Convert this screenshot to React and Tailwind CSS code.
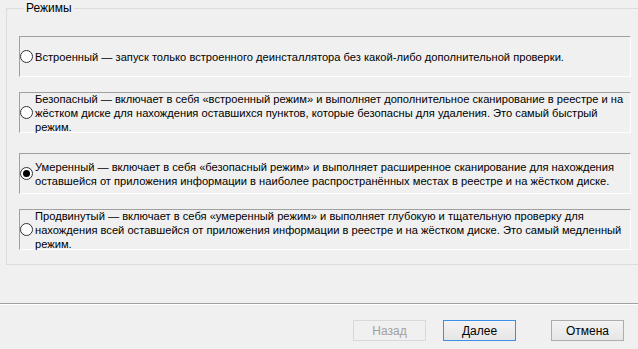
const modes = [
  {
    id: 'builtin',
    text: 'Встроенный — запуск только встроенного деинсталлятора без какой-либо дополнительной проверки.',
    mt: 'mt-[21px]',
  },
  {
    id: 'safe',
    text: 'Безопасный — включает в себя «встроенный режим» и выполняет дополнительное сканирование в реестре и на жёстком диске для нахождения оставшихся пунктов, которые безопасны для удаления. Это самый быстрый режим.',
    mt: 'mt-[15px]',
  },
  {
    id: 'moderate',
    text: 'Умеренный — включает в себя «безопасный режим» и выполняет расширенное сканирование для нахождения оставшейся от приложения информации в наиболее распространённых местах в реестре и на жёстком диске.',
    mt: 'mt-[20px]',
  },
  {
    id: 'advanced',
    text: 'Продвинутый — включает в себя «умеренный режим» и выполняет глубокую и тщательную проверку для нахождения всей оставшейся от приложения информации в реестре и на жёстком диске. Это самый медленный режим.',
    mt: 'mt-[15px]',
  },
];

function Radio({ checked }) {
  return (
    <span className="shrink-0 w-[13px] h-[13px] rounded-full border border-[#333333] bg-white flex items-center justify-center">
      {checked && <span className="w-[7px] h-[7px] rounded-full bg-black" />}
    </span>
  );
}

function Button({ children, variant }) {
  const styles = {
    disabled: 'border-[#d9d9d9] text-[#a0a0a0] bg-[#f0f0f0]',
    primary: 'border-[#3c8fe8] text-black bg-gradient-to-b from-[#f3f3f3] to-[#e6e6e6]',
    normal: 'border-[#adadad] text-black bg-gradient-to-b from-[#f3f3f3] to-[#e6e6e6]',
  };
  return (
    <button className={`w-[73px] h-[21px] border text-[12px] leading-none ${styles[variant]}`}>
      {children}
    </button>
  );
}

export default function App() {
  const selected = 'moderate';

  return (
    <div className="w-[638px] h-[349px] overflow-hidden bg-[#f0f0f0] text-black text-[11.15px] font-['Liberation_Sans',Arial,sans-serif]">
      <div className="pt-[2px] pl-[6px] h-[303px]">
        <fieldset className="w-[640px] h-[263px] border border-[#dcdcdc] pl-[12px] pr-0">
          <legend className="ml-[5px] px-[2px] leading-[13px] text-[12px]">Режимы</legend>
          {modes.map((m) => (
            <label
              key={m.id}
              className={`${m.mt} flex items-center w-[612px] h-[41px] border-t border-l border-[#a0a0a0] border-b-white border-r-white border-b border-r`}
            >
              <Radio checked={m.id === selected} />
              <span className="pl-[2px] pr-[6px] leading-[14px]">{m.text}</span>
            </label>
          ))}
        </fieldset>
      </div>
      <div className="border-t border-[#a0a0a0] border-b border-b-white" />
      <div className="flex justify-end pt-[15px] pr-[14px]">
        <Button variant="disabled">Назад</Button>
        <div className="ml-[17px]">
          <Button variant="primary">Далее</Button>
        </div>
        <div className="ml-[35px]">
          <Button variant="normal">Отмена</Button>
        </div>
      </div>
    </div>
  );
}
